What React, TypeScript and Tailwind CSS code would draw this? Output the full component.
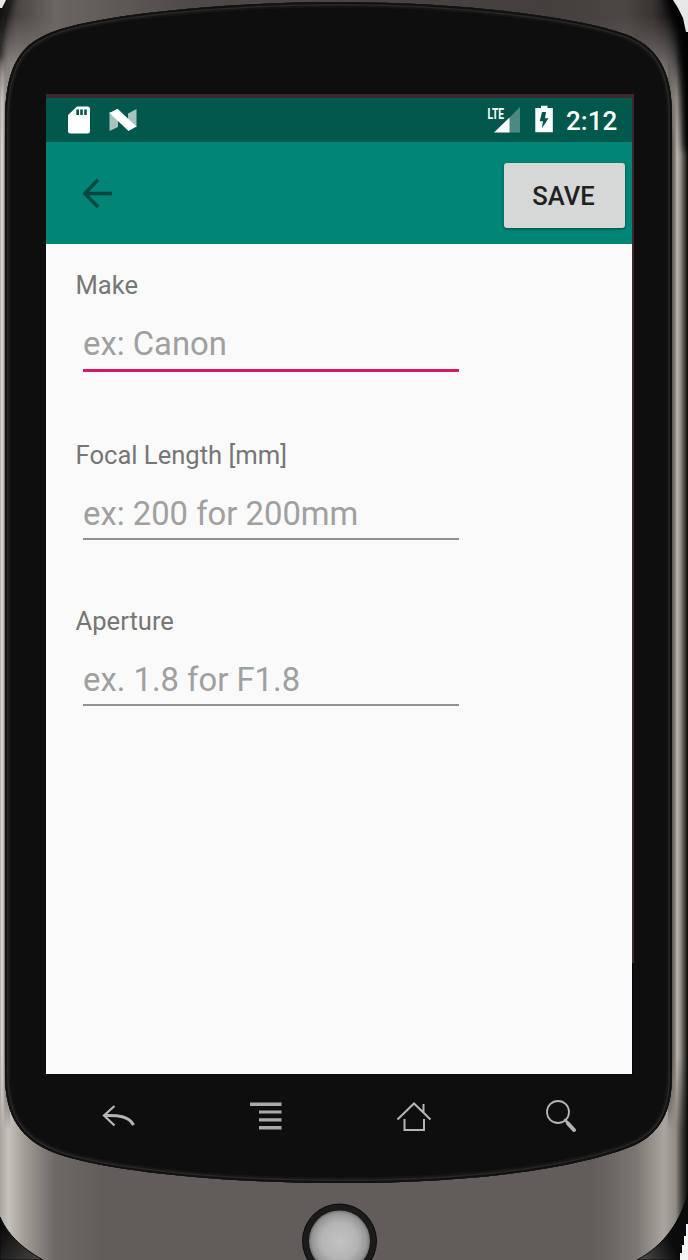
import React from "react";

function PhoneShell() {
  const glass =
    "M5 115 C7 62 22 43 55 31 C98 16 215 2 339 2 C455 2 575 16 625 34 C656 46 672 68 672 115 L672 1075 C672 1118 656 1139 622 1150 C585 1163 500 1183 339 1183 C215 1183 100 1170 55 1153 C22 1140 5 1118 5 1075 Z";
  return (
    <svg className="absolute inset-0" width="688" height="1260" viewBox="0 0 688 1260" fill="none" aria-hidden="true">
      <defs>
        <linearGradient id="metal" x1="0" x2="688" y1="0" y2="0" gradientUnits="userSpaceOnUse">
          <stop offset="0" stopColor="#aaa6a1" />
          <stop offset="0.012" stopColor="#c5c1bb" />
          <stop offset="0.035" stopColor="#a29d96" />
          <stop offset="0.08" stopColor="#6f6966" />
          <stop offset="0.15" stopColor="#625c5a" />
          <stop offset="0.86" stopColor="#625c5a" />
          <stop offset="0.925" stopColor="#7b7671" />
          <stop offset="0.965" stopColor="#aaa59f" />
          <stop offset="0.982" stopColor="#918c86" />
          <stop offset="0.99" stopColor="#4b4741" />
          <stop offset="1" stopColor="#080807" />
        </linearGradient>
        <linearGradient id="metalTop" x1="0" x2="688" y1="0" y2="0" gradientUnits="userSpaceOnUse">
          <stop offset="0" stopColor="#1d1a18" />
          <stop offset="0.025" stopColor="#4b4643" />
          <stop offset="0.08" stopColor="#6c6662" />
          <stop offset="0.28" stopColor="#4f4a47" />
          <stop offset="0.8" stopColor="#443f3d" />
          <stop offset="0.91" stopColor="#4b4643" />
          <stop offset="0.95" stopColor="#373330" />
          <stop offset="0.98" stopColor="#0b0a0a" />
        </linearGradient>
        <linearGradient id="fade" x1="0" x2="0" y1="15" y2="100" gradientUnits="userSpaceOnUse">
          <stop offset="0" stopColor="#fff" />
          <stop offset="1" stopColor="#000" />
        </linearGradient>
        <mask id="topMask" maskUnits="userSpaceOnUse" x="0" y="0" width="688" height="120">
          <rect width="688" height="120" fill="url(#fade)" />
        </mask>
        <linearGradient id="sideFade" x1="0" x2="0" y1="60" y2="1130" gradientUnits="userSpaceOnUse">
          <stop offset="0" stopColor="#000" />
          <stop offset="0.08" stopColor="#fff" />
          <stop offset="0.93" stopColor="#fff" />
          <stop offset="1" stopColor="#000" />
        </linearGradient>
        <mask id="sideMask" maskUnits="userSpaceOnUse" x="0" y="0" width="688" height="1260">
          <rect width="688" height="1260" fill="url(#sideFade)" />
        </mask>
        <linearGradient id="leftSide" x1="0" x2="10" y1="0" y2="0" gradientUnits="userSpaceOnUse">
          <stop offset="0" stopColor="#aaa59f" />
          <stop offset="0.2" stopColor="#e3dfdb" />
          <stop offset="0.32" stopColor="#c6c1bc" />
          <stop offset="0.5" stopColor="#6f6862" />
          <stop offset="1" stopColor="#28231f" />
        </linearGradient>
        <linearGradient id="rightSide" x1="668" x2="688" y1="0" y2="0" gradientUnits="userSpaceOnUse">
          <stop offset="0" stopColor="#141416" />
          <stop offset="0.2" stopColor="#5a554f" />
          <stop offset="0.38" stopColor="#918c86" />
          <stop offset="0.44" stopColor="#bab6b1" />
          <stop offset="0.62" stopColor="#96918b" />
          <stop offset="0.82" stopColor="#4b4741" />
          <stop offset="1" stopColor="#080807" />
        </linearGradient>
        <radialGradient id="ball" cx="0.5" cy="0.5" r="0.5">
          <stop offset="0" stopColor="#c3c3c3" />
          <stop offset="0.6" stopColor="#b4b4b4" />
          <stop offset="0.9" stopColor="#979797" />
          <stop offset="1" stopColor="#747474" />
        </radialGradient>
        <linearGradient id="underL" x1="0" x2="40" y1="1230" y2="1260" gradientUnits="userSpaceOnUse">
          <stop offset="0" stopColor="#0b0b0b" />
          <stop offset="1" stopColor="#474442" />
        </linearGradient>
        <linearGradient id="underR" x1="640" x2="688" y1="1260" y2="1240" gradientUnits="userSpaceOnUse">
          <stop offset="0" stopColor="#514d4b" />
          <stop offset="0.7" stopColor="#0b0b0b" />
        </linearGradient>
        <filter id="soft" x="-20" y="-30" width="740" height="250" filterUnits="userSpaceOnUse">
          <feGaussianBlur stdDeviation="4" />
        </filter>
      </defs>
      <rect width="688" height="1260" fill="url(#metal)" />
      <rect width="688" height="120" fill="url(#metalTop)" mask="url(#topMask)" />
      <g mask="url(#sideMask)">
        <rect width="10" height="1260" fill="url(#leftSide)" />
        <rect x="668" width="20" height="1260" fill="url(#rightSide)" />
      </g>
      <path d="M-5 60 C-3 24 2 6 10 -6" stroke="#090909" strokeWidth="9" filter="url(#soft)" />
      <path d="M668 -10 C684 16 688 50 691 150" stroke="#030303" strokeWidth="13" filter="url(#soft)" />
      <path d="M0 0 H6 L4 4 L2 8 H0 Z" fill="#e8e8e8" />
      <path d="M673 0 H688 V32 H686 L683 18 L678 8 Z" fill="#e8e7e6" />
      <path d="M0 1217 C7 1233 20 1247 43 1260 H0 Z" fill="url(#underL)" stroke="#0b0a0a" />
      <path d="M688 1193 C681 1220 665 1245 637 1260 H688 Z" fill="url(#underR)" stroke="#0b0a0a" />
      <path d="M688 1224 H686 V1236 H684 V1245 H682 V1253 H680 V1260 H688 Z" fill="#f5f5f5" />
      <path d={glass} fill="#0e0e0e" />
      <clipPath id="glassClip">
        <path d={glass} />
      </clipPath>
      <g clipPath="url(#glassClip)">
        <path d={glass} stroke="#171616" strokeWidth="11" />
        <path d={glass} stroke="#292725" strokeWidth="7" />
        <path d={glass} stroke="#121111" strokeWidth="4" />
      </g>
      <circle cx="339.5" cy="1241" r="37" fill="#1c1b1a" stroke="#0b0b0b" />
      <circle cx="339.5" cy="1241" r="30.5" fill="url(#ball)" />
      <path d="M46 94 H634 V963 H632 V98 H46 Z" fill="#3c2930" />
      <path d="M632 963 H633 V1074 H632 Z" fill="#05020f" />
    </svg>
  );
}

function StatusBar() {
  return (
    <div className="flex h-11 items-start bg-[#00574b]">
      <svg className="ml-[22px] mt-[8px]" width="22" height="28" viewBox="0 0 22 28">
        <path
          fill="#fff"
          fillRule="evenodd"
          d="M9 .5 H19.500 Q22 .5 22 3 V25 Q22 27.500 19.500 27.500 H2.500 Q0 27.500 0 25 V9 Z M8.300 3.500 V9 H11 V3.500 Z M12.200 3.500 V9 H14.800 V3.500 Z M16.200 3.500 V9 H18.800 V3.500 Z"
        />
      </svg>
      <svg className="ml-[19px] mt-[10px]" width="28" height="24" viewBox="0 0 28 24">
        <path d="M.5 4 V23 L9 19 V4 Z M27.500 1 L19 5.500 V19 H27.500 Z" fill="#a5c4bf" />
        <path d="M.5 5 L8.500 .8 L27.500 18.500 L19.500 23 Z" fill="#fff" />
      </svg>
      <svg className="ml-[346px] mt-[4px] overflow-visible" width="38" height="32" viewBox="-4 -4 38 32">
        <path d="M33 1 V26.500 H22 V12 Z" fill="#4d8981" />
        <path d="M22.500 11.500 V26.500 H7 Z" fill="#fff" />
        <text x="0.500" y="12.500" fill="#fff" fontFamily="Roboto, sans-serif" fontWeight="700" fontSize="15.500" textLength="16.500" lengthAdjust="spacingAndGlyphs">
          LTE
        </text>
      </svg>
      <svg className="ml-[14px] mt-[7px]" width="18" height="28" viewBox="0 0 18 28">
        <path d="M6 .8 H12.500 V3 H17.800 V27.200 H.3 V3 H6 Z" fill="#fff" />
        <path d="M11 7 H7 L4.700 16.300 H8 L6.800 23.500 L13.500 13.200 H10 Z" fill="#00574b" />
      </svg>
      <span className="ml-[13px] mt-[8px] w-[56px] whitespace-nowrap text-[26px] font-medium leading-[30px] text-white">2:12</span>
    </div>
  );
}

type FieldProps = { label: string; placeholder: string; focused?: boolean };

function Field({ label, placeholder, focused }: FieldProps) {
  return (
    <label className="flex flex-col">
      <span className="-ml-[0.5px] h-[30px] text-[25.6px] leading-[30px] text-[#767676]">{label}</span>
      <input
        placeholder={placeholder}
        className={
          "ml-[7px] mt-[20px] w-[376px] bg-transparent p-0 text-[32.8px] leading-[48px] outline-none placeholder:text-[#a0a0a0] placeholder:opacity-100 " +
          (focused ? "h-[52px] border-b-[3px] border-[#d81b60] pb-[1px]" : "h-[50px] border-b-2 border-[#919191]")
        }
      />
    </label>
  );
}

function HardwareKeys() {
  return (
    <div className="flex h-[84px] items-center">
      <svg className="ml-[55px]" width="36" height="26" viewBox="0 0 36 26" fill="none" stroke="#b5b5b5">
        <path d="M13.500 3 L3 12.500 L13.500 22.500" strokeWidth="2.300" />
        <path d="M3 12.500 C17 12 28 13 32.500 22" strokeWidth="3" />
      </svg>
      <svg className="ml-[112px]" width="34" height="32" viewBox="0 0 34 32" fill="#aaa">
        <path d="M1 2.500 H32.500 V6 H1 Z M10 10.500 H32.500 V13.500 H10 Z M10 18.300 H32.500 V21.500 H10 Z M10 26 H32.500 V29.500 H10 Z" />
      </svg>
      <svg className="ml-[112px]" width="38" height="34" viewBox="0 0 38 34" fill="none" stroke="#b5b5b5" strokeWidth="2">
        <path d="M2.500 20.500 L19 4.500 L35.500 20.500 M28.500 5 V13" />
        <path d="M9.500 20 V31 H29 V20" />
      </svg>
      <svg className="ml-[110px]" width="36" height="36" viewBox="0 0 36 36" fill="none" stroke="#b5b5b5" strokeLinecap="round">
        <circle cx="15" cy="14" r="11" strokeWidth="1.800" />
        <path d="M22 22 L25 25" strokeWidth="2.500" />
        <path d="M25 25.500 L31 32" strokeWidth="4" />
      </svg>
    </div>
  );
}

export default function App() {
  return (
    <div className="relative h-[1260px] w-[688px] overflow-hidden bg-[#0e0e0e] font-[Roboto,sans-serif]">
      <PhoneShell />
      <div className="relative flex flex-col pl-[46px] pt-[98px]">
        <div className="flex h-[976px] w-[586px] flex-col bg-[#fafafa]">
          <StatusBar />
          <header className="flex h-[102px] items-start justify-between bg-[#008577]">
            <button aria-label="Back" className="ml-[36px] mt-[36px]">
              <svg width="32" height="32" viewBox="0 0 32 32" fill="none" stroke="#00473d" strokeWidth="3.400">
                <path d="M3 15.500 H30 M16 1.800 L2.800 15.500 L16 29" />
              </svg>
            </button>
            <button className="mr-[7px] mt-[21px] h-[65px] w-[121px] rounded-[3px] bg-[#d6d7d7] pr-[2px] pt-[2px] text-[25.6px] font-medium text-[#212121] shadow-[0_1px_3px_rgba(0,0,0,0.45)]">
              SAVE
            </button>
          </header>
          <main className="flex flex-col pl-[30px] pt-[26px]">
            <Field label="Make" placeholder="ex: Canon" focused />
            <div className="mt-[68px]">
              <Field label="Focal Length [mm]" placeholder="ex: 200 for 200mm" />
            </div>
            <div className="mt-[66px]">
              <Field label="Aperture" placeholder="ex. 1.8 for F1.8" />
            </div>
          </main>
        </div>
        <HardwareKeys />
      </div>
    </div>
  );
}
